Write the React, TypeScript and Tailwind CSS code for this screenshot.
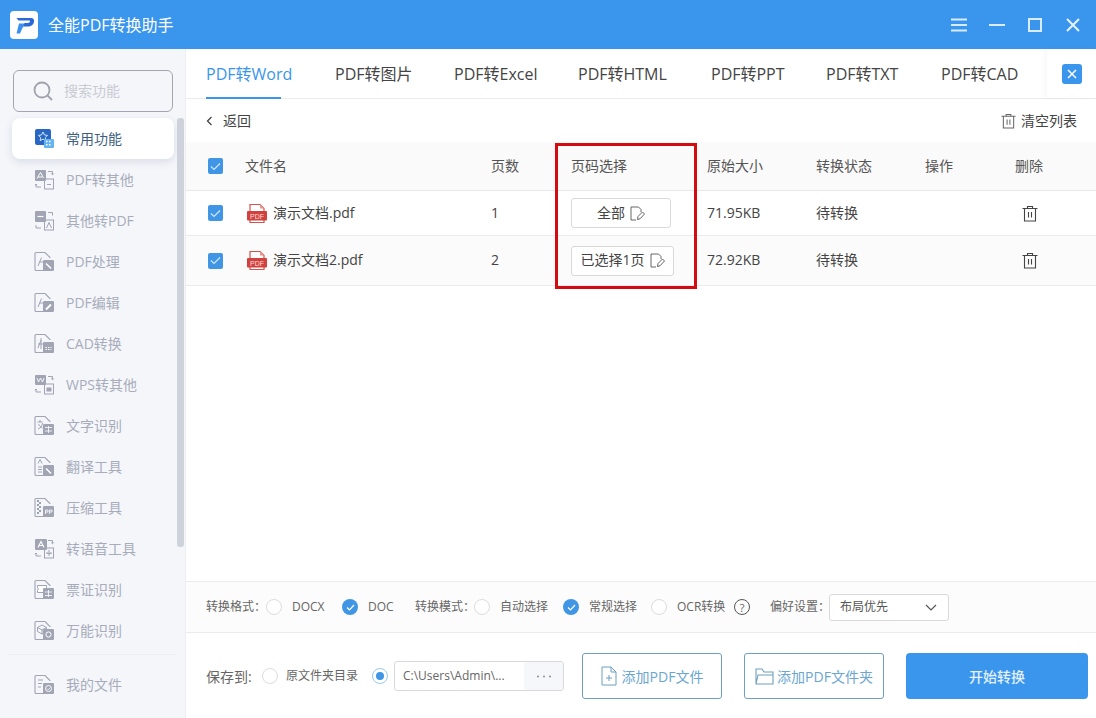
import type { ReactNode } from 'react';

const font = { fontFamily: '"Open Sans", "Noto Sans CJK SC", sans-serif' };

const GRAY = '#a0a4b3';

// outline page with a folded corner, left part of most sidebar icons
const Page = () => (
  <path d="M2 1.5h9l5 5V7M2 1.5A1 1 0 0 0 1 2.5v16a1 1 0 0 0 1 1h9" fill="none" stroke={GRAY} strokeWidth="1.1" />
);

const Badge = ({ children }: { children?: ReactNode }) => (
  <g>
    <rect x="9" y="9" width="11" height="11" rx="1.2" fill={GRAY} />
    {children}
  </g>
);

const Swap = () => (
  <g fill="none" stroke={GRAY} strokeWidth="1">
    <path d="M14 2.5h4.5v3M17.2 4.5l1.3 1.3 1.3-1.3" />
    <path d="M7 18H2v-3M.8 16.2 2 15l1.200 1.200" />
    <rect x="10.500" y="10" width="9" height="10" />
    <path d="M13 15.500h4" />
  </g>
);

const icons: Record<string, ReactNode> = {
  pdfOther: (
    <>
      <rect x="1" y="1" width="11" height="11" rx="1" fill={GRAY} />
      <path d="M3 9.500 6.500 3.500 9.500 9M4 8h4" stroke="#fff" strokeWidth="1" fill="none" />
      <Swap />
    </>
  ),
  otherPdf: (
    <>
      <rect x="1" y="1" width="11" height="11" rx="1" fill={GRAY} />
      <path d="M3.500 6.500h6" stroke="#fff" strokeWidth="1.200" />
      <g fill="none" stroke={GRAY} strokeWidth="1">
        <path d="M14 2.500h4.500v3M7 18H2v-3" />
        <rect x="10.500" y="10" width="9" height="10" />
        <path d="M12.500 18 15 12.500 17.500 18" />
      </g>
    </>
  ),
  handle: (
    <>
      <Page />
      <path d="M4 15 7.500 6.500M5 11h4" stroke={GRAY} fill="none" />
      <Badge>
        <path d="M12 12.500l5 5" stroke="#fff" strokeWidth="1.600" />
      </Badge>
    </>
  ),
  edit: (
    <>
      <Page />
      <path d="M4 15 7.500 6.500M5 11h4" stroke={GRAY} fill="none" />
      <Badge>
        <path d="M12 17.500l5-5" stroke="#fff" strokeWidth="2" />
      </Badge>
    </>
  ),
  cad: (
    <>
      <Page />
      <path d="M4 11h5M7 5v11M4 15l3-8" stroke={GRAY} fill="none" />
      <Badge>
        <path d="M11.500 14.500h6M11.500 16.500h6" stroke="#fff" strokeDasharray="1.500 1" />
      </Badge>
    </>
  ),
  wps: (
    <>
      <rect x="1" y="1" width="11" height="10" rx="1" fill={GRAY} />
      <path d="M3 4l1.500 4L6.500 4 8.500 8 10 4" stroke="#fff" strokeWidth=".9" fill="none" />
      <Swap />
      <path d="M12.500 13.500h5v4h-5z" fill={GRAY} />
    </>
  ),
  ocr: (
    <>
      <Page />
      <path d="M3.500 7h5M6 5v2M4 14c3-1 4-3 4.500-6M4.500 9c1 2 2 3 4 4" stroke={GRAY} fill="none" />
      <Badge>
        <path d="M11 12.500h7M11 16h7M14.500 11v7" stroke="#fff" strokeWidth=".8" />
      </Badge>
    </>
  ),
  translate: (
    <>
      <Page />
      <path d="M4 7.500 6 3.500l2 4M4 11h4M4 13.500h4M4 16h4" stroke={GRAY} fill="none" />
      <Badge>
        <path d="M12 12.500l5 5" stroke="#fff" strokeWidth="1.600" />
      </Badge>
    </>
  ),
  zip: (
    <>
      <Page />
      <path d="M3 4h2M5 6h2M3 8h2M5 10h2M3 12h2M5 14h2M3 16h2" stroke="#7f8494" strokeWidth="1.400" />
      <Badge>
        <path d="M11.500 13v4M11.500 13h2.500v2h-2.500M15.500 13v4M15.500 13h2.500v2h-2.500" stroke="#fff" strokeWidth=".8" fill="none" />
      </Badge>
    </>
  ),
  voice: (
    <>
      <rect x="1" y="1" width="12" height="11" rx="1" fill={GRAY} />
      <path d="M4 9.500 7 3.500l3 6M5 7.500h4" stroke="#fff" strokeWidth="1.100" fill="none" />
      <Swap />
      <path d="M15 12v6M13 14v2M17 14v2" stroke={GRAY} />
    </>
  ),
  ticket: (
    <>
      <Page />
      <path d="M3.500 6.500h9v2a2 2 0 0 0 0 3v2h-9v-2a2 2 0 0 0 0-3z" fill="#fff" stroke={GRAY} />
      <Badge>
        <path d="M11 13h7M11 16.500h7M14.500 11v7" stroke="#fff" strokeWidth=".8" />
      </Badge>
    </>
  ),
  universal: (
    <>
      <Page />
      <path d="M3.500 7.500 8 5l4.500 2.500v4L8 14l-4.500-2.500zM3.500 7.500 8 10l4.500-2.500M8 10v4" fill="none" stroke={GRAY} />
      <Badge>
        <circle cx="14.500" cy="14.500" r="2.600" fill="none" stroke="#fff" />
      </Badge>
    </>
  ),
  files: (
    <>
      <Page />
      <path d="M4 6h5M4 9.500h4M4 13h3" stroke={GRAY} fill="none" />
      <Badge>
        <circle cx="14.500" cy="14.500" r="3" fill="none" stroke="#fff" />
        <path d="M13 14.500l1.200 1.200 2-2" fill="none" stroke="#fff" strokeWidth=".8" />
      </Badge>
    </>
  ),
};

const SideIcon = ({ name }: { name: string }) => (
  <svg width="21" height="21" viewBox="0 0 21 21" className="shrink-0">
    {icons[name]}
  </svg>
);

const menu = [
  ['pdfOther', 'PDF转其他'],
  ['otherPdf', '其他转PDF'],
  ['handle', 'PDF处理'],
  ['edit', 'PDF编辑'],
  ['cad', 'CAD转换'],
  ['wps', 'WPS转其他'],
  ['ocr', '文字识别'],
  ['translate', '翻译工具'],
  ['zip', '压缩工具'],
  ['voice', '转语音工具'],
  ['ticket', '票证识别'],
  ['universal', '万能识别'],
];

const MenuItem = ({ icon, label }: { icon: string; label: string }) => (
  <div className="flex h-[41px] items-center gap-[11px] pl-[34px] text-[14px] text-[#a8acba]">
    <SideIcon name={icon} />
    <span className="whitespace-nowrap">{label}</span>
  </div>
);

const Sidebar = () => (
  <aside className="relative flex w-[186px] shrink-0 flex-col border-r border-[#eceef2] bg-[#f4f6fa] pt-[21px]">
    <div className="mx-[13px] flex h-[42px] w-[160px] items-center gap-[11px] rounded-[6px] border border-[#a3a6b0] pb-[2px] pl-[19px] text-[14px] text-[#c9cbd2]">
      <svg width="20" height="20" viewBox="0 0 20 20" fill="none" stroke="#a0a3ad" strokeWidth="1.800" className="mt-[2px]">
        <circle cx="9" cy="9" r="7.500" />
        <path d="M14.500 14.500 19 19" />
      </svg>
      <span>搜索功能</span>
    </div>
    <div className="mx-[12px] mt-[6px] flex h-[41px] w-[162px] shrink-0 items-center gap-[11px] rounded-[8px] bg-white pl-[22px] text-[14px] text-[#3f5f80] shadow-[0_3px_8px_rgba(60,70,100,0.14)]">
      <svg width="21" height="21" viewBox="0 0 21 21" className="shrink-0">
        <rect x="1" y="1" width="16" height="16" rx="2" fill="#2a66c4" />
        <path d="M9 4l1.500 3 3 .4-2.200 2.200.5 3L9 11.200l-2.800 1.400.5-3L4.500 7.400l3-.4z" fill="none" stroke="#cfe6ff" />
        <rect x="10" y="11" width="10" height="9" rx="1" fill="#65b4f2" />
        <path d="M12 13.500h1.500M15 13.500h1.500M12 16.800h1.500M15 16.800h1.500" stroke="#fff" strokeWidth="1.400" />
      </svg>
      <span>常用功能</span>
    </div>
    <div>
      {menu.map(([icon, label]) => (
        <MenuItem key={label} icon={icon} label={label} />
      ))}
    </div>
    <div className="mx-[8px] mt-[3px] border-t border-[#eceef3]" />
    <div className="mt-[9px]">
      <MenuItem icon="files" label="我的文件" />
    </div>
    {/* scrollbar thumb */}
    <div className="absolute left-[177px] top-[69px] h-[429px] w-[7px] rounded-[3px] bg-[#cdd2db]" />
  </aside>
);

const Check = () => (
  <span className="flex h-4 w-[15px] items-center justify-center rounded-[2px] bg-[#4096e4]">
    <svg width="11" height="9" viewBox="0 0 11 9" fill="none" stroke="#cfe6fb" strokeWidth="1.200">
      <path d="M1 4.500 4 7.500 10 1.500" />
    </svg>
  </span>
);

const PdfIcon = () => (
  <svg width="20" height="21" viewBox="0 0 20 21" className="shrink-0">
    <path d="M3 8V1.500h10l4 4V8M3 17v2.500h14V17" fill="none" stroke="#d5534f" strokeWidth="1.200" />
    <path d="M13 1.500V5.500h4z" fill="#e79a96" />
    <rect x="0" y="8" width="20" height="9.500" rx="1" fill="#d1423e" />
    <text x="10" y="15.500" textAnchor="middle" fontSize="7" fill="#fbdcdb" fontFamily="Liberation Sans, sans-serif">
      PDF
    </text>
  </svg>
);

const EditIcon = () => (
  <svg width="15" height="15" viewBox="0 0 15 15" fill="none" stroke="#555" strokeWidth=".9" className="shrink-0">
    <path d="M6 14H1V1h7.500L11 3.500V6" />
    <path d="M7.500 13.500 8 10.500l4.500-4.500 2 2L10 12.800z" />
  </svg>
);

const Trash = ({ size = 16, color = '#444' }: { size?: number; color?: string }) => (
  <svg width={size} height={size + 1} viewBox="0 0 16 17" fill="none" stroke={color} strokeWidth="1.100">
    <path d="M.5 3.500h15M5.500 3.500v-2h5v2M2.500 3.500v12.500h11V3.500M6.500 7v5.500M9.500 7v5.500" />
  </svg>
);

const tableCols = 'grid grid-cols-[59px_246px_80px_136px_109px_109px_90px_81px] items-center text-[14px]';

const FileRow = ({ name, pages, pick, pickWidth, size, shade, height }: {
  name: string;
  pages: string;
  pick: string;
  pickWidth: string;
  size: string;
  shade: string;
  height: string;
}) => (
  <div className={`${tableCols} ${shade} ${height} shrink-0 border-b border-[#ebebeb] text-[#444]`}>
    <div className="pl-[22px]">
      <Check />
    </div>
    <div className="flex items-center gap-[6px] pl-[2px]">
      <PdfIcon />
      <span className="pb-[2px]">{name}</span>
    </div>
    <div className="pb-[2px]">{pages}</div>
    <div>
      <div className={`flex h-[30px] ${pickWidth} items-center justify-center gap-[5px] rounded-[3px] border border-[#d9d9d9] bg-white`}>
        <span className="whitespace-nowrap pb-[2px]">{pick}</span>
        <EditIcon />
      </div>
    </div>
    <div className="pb-[2px]">{size}</div>
    <div className="pb-[2px]">待转换</div>
    <div />
    <div className="pl-[7px]">
      <Trash />
    </div>
  </div>
);

const Radio = ({ checked = false }: { checked?: boolean }) =>
  checked ? (
    <span className="flex h-4 w-4 shrink-0 items-center justify-center rounded-full bg-[#4096e4]">
      <svg width="9" height="7" viewBox="0 0 9 7" fill="none" stroke="#fff" strokeWidth="1.200">
        <path d="M1 3.500 3.500 6 8 1" />
      </svg>
    </span>
  ) : (
    <span className="h-4 w-4 shrink-0 rounded-full border border-[#dcdcdc] bg-white" />
  );

const tabs = [
  ['PDF转Word', 'w-[129px]'],
  ['PDF转图片', 'w-[119px]'],
  ['PDF转Excel', 'w-[124px]'],
  ['PDF转HTML', 'w-[133px]'],
  ['PDF转PPT', 'w-[115px]'],
  ['PDF转TXT', 'w-[115px]'],
  ['PDF转CAD', 'w-[85px]'],
];

const heads = ['文件名', '页数', '页码选择', '原始大小', '转换状态', '操作', '删除'];

const App = () => {
  return (
    <div className="flex h-[718px] w-[1096px] flex-col overflow-hidden bg-white" style={font}>
      <header className="flex h-[49px] shrink-0 items-center bg-[#3a96ec] pl-[10px] text-white">
        <svg width="28" height="28" viewBox="0 0 28 28">
          <rect width="28" height="28" rx="4" fill="#fff" />
          <path d="M6.500 7H21c2.500 0 3.500 1.800 3 4s-2.500 4.500-5 4.500h-6.500l2-3.500h3.500c1 0 1.800-.6 2-1.400s-.3-1.100-1-1.100H8.500z" fill="#2a69d8" />
          <path d="M9 12.500h5.500L10 22.500H6.500z" fill="#3b8ff0" />
        </svg>
        <span className="ml-[10px] text-[16px]">全能PDF转换助手</span>
        <div className="ml-auto mr-[16px] flex items-center">
          <svg width="16" height="14" viewBox="0 0 16 14" stroke="#d8ecfd" strokeWidth="2">
            <path d="M0 1.500h16M0 7h16M0 12.500h16" />
          </svg>
          <svg width="16" height="14" viewBox="0 0 16 14" stroke="#d8ecfd" strokeWidth="2" className="ml-[22px]">
            <path d="M0 7h16" />
          </svg>
          <svg width="14" height="14" viewBox="0 0 14 14" fill="none" stroke="#d8ecfd" strokeWidth="2" className="ml-[23px]">
            <rect x="1" y="1" width="12" height="12" />
          </svg>
          <svg width="14" height="14" viewBox="0 0 14 14" stroke="#e6f3fe" strokeWidth="2" className="ml-[24px]">
            <path d="M1 1l12 12M13 1 1 13" />
          </svg>
        </div>
      </header>

      <div className="flex min-h-0 flex-1">
        <Sidebar />

        <main className="relative flex min-w-0 flex-1 flex-col">
          <nav className="flex h-[50px] shrink-0 border-b border-[#ebebeb] pl-5 text-[16px] text-[#444]">
            {tabs.map(([label, width], i) => (
              <div key={label} className={`${width} relative -mb-px flex h-[50px] items-center whitespace-nowrap ${i === 0 ? 'text-[#3a96ec]' : ''}`}>
                {label}
                {i === 0 && <span className="absolute bottom-0 left-0 h-[2px] w-[75px] bg-[#3a96ec]" />}
              </div>
            ))}
            <div className="ml-auto flex w-[49px] items-center justify-center bg-white shadow-[-3px_0_5px_rgba(0,0,0,0.03)]">
              <span className="flex h-5 w-5 items-center justify-center rounded-[3px] bg-[#3a96ec]">
                <svg width="10" height="10" viewBox="0 0 10 10" stroke="#fff" strokeWidth="1.500">
                  <path d="M1 1l8 8M9 1 1 9" />
                </svg>
              </span>
            </div>
          </nav>

          <div className="flex h-[43px] shrink-0 items-center justify-between pl-5 pr-[19px] text-[14px] text-[#444]">
            <div className="flex items-center gap-[10px]">
              <svg width="7" height="10" viewBox="0 0 7 10" fill="none" stroke="#444" strokeWidth="1.300">
                <path d="M5.500 1 1.500 5l4 4" />
              </svg>
              <span>返回</span>
            </div>
            <div className="flex items-center gap-[5px]">
              <Trash size={15} color="#666" />
              <span>清空列表</span>
            </div>
          </div>

          <div className={`${tableCols} h-[49px] shrink-0 border-b border-[#e8e8e8] bg-[#fafafa] text-[#555]`}>
            <div className="pl-[22px]">
              <Check />
            </div>
            {heads.map((head) => (
              <div key={head} className="pb-[2px]">
                {head}
              </div>
            ))}
          </div>
          <FileRow name="演示文档.pdf" pages="1" pick="全部" pickWidth="w-[100px]" size="71.95KB" shade="bg-white" height="h-[45px]" />
          <FileRow name="演示文档2.pdf" pages="2" pick="已选择1页" pickWidth="w-[103px]" size="72.92KB" shade="bg-[#fbfbfb]" height="h-[50px]" />

          <div className="flex-1" />

          <div className="flex h-[52px] shrink-0 items-center whitespace-nowrap border-y border-[#ebebeb] bg-[#fcfcfc] pl-5 text-[12px] text-[#666]">
            <span className="w-[60px]">转换格式：</span>
            <Radio />
            <span className="ml-[10px] w-[50px]">DOCX</span>
            <Radio checked />
            <span className="ml-[10px] w-[47px]">DOC</span>
            <span className="w-[59px]">转换模式：</span>
            <Radio />
            <span className="ml-[10px] w-[63px]">自动选择</span>
            <Radio checked />
            <span className="ml-[10px] w-[62px]">常规选择</span>
            <Radio />
            <span className="ml-[10px] w-[57px]">OCR转换</span>
            <span className="flex h-4 w-4 items-center justify-center rounded-full border border-[#555] text-[11px] leading-none">?</span>
            <span className="ml-[20px] w-[59px]">偏好设置：</span>
            <div className="flex h-[27px] w-[120px] items-center justify-between rounded-[3px] border border-[#d9d9d9] bg-white pl-[10px] pr-[11px] text-[#555]">
              <span>布局优先</span>
              <svg width="12" height="7" viewBox="0 0 12 7" fill="none" stroke="#555" strokeWidth="1.200">
                <path d="M1 1l5 5 5-5" />
              </svg>
            </div>
          </div>

          <div className="flex h-[85px] shrink-0 items-start whitespace-nowrap pl-5 pt-[20px]">
            <div className="flex h-[46px] items-center text-[#666]">
              <span className="w-[56px] text-[14px]">保存到:</span>
              <Radio />
              <span className="ml-[8px] w-[86px] text-[12px]">原文件夹目录</span>
              <span className="flex h-4 w-4 items-center justify-center rounded-full border border-[#9cc8ee] bg-white">
                <span className="h-2 w-2 rounded-full bg-[#4096e4]" />
              </span>
              <div className="ml-[6px] flex h-[30px] w-[170px] items-center overflow-hidden rounded-[3px] border border-[#d9d9d9] bg-white text-[12px]">
                <span className="w-[129px] pl-[8px]">C:\Users\Admin\...</span>
                <span className="flex h-full flex-1 items-center justify-center bg-[#f5f7fa]">
                  <svg width="16" height="3" viewBox="0 0 16 3" fill="#8a8f99">
                    <circle cx="2" cy="1.500" r="1" />
                    <circle cx="8" cy="1.500" r="1" />
                    <circle cx="14" cy="1.500" r="1" />
                  </svg>
                </span>
              </div>
            </div>
            <div className="ml-[18px] flex h-[46px] w-[140px] items-center justify-center gap-[5px] rounded-[3px] border border-[#6f9fbe] text-[14px] text-[#6aa6d0]">
              <svg width="16" height="20" viewBox="0 0 16 20" fill="none" stroke="#6f9fbe" strokeWidth="1">
                <path d="M1 1h9l5 5v13H1zM10 1v5h5M5 12h6M8 9v6" />
              </svg>
              <span>添加PDF文件</span>
            </div>
            <div className="ml-[22px] flex h-[46px] w-[140px] items-center justify-center gap-[3px] rounded-[3px] border border-[#6f9fbe] text-[14px] text-[#6aa6d0]">
              <svg width="19" height="17" viewBox="0 0 19 17" fill="none" stroke="#6f9fbe" strokeWidth="1.100">
                <path d="M1 16V1h6l2 3h9v3M1 16 3 7h15v9z" />
              </svg>
              <span>添加PDF文件夹</span>
            </div>
            <div className="ml-[22px] flex h-[46px] w-[182px] items-center justify-center rounded-[4px] bg-[#3a96ec] text-[14px] font-medium text-[#e4f1fd]">
              开始转换
            </div>
          </div>

          {/* red annotation drawn over the table */}
          <div className="pointer-events-none absolute left-[369px] top-[94px] h-[146px] w-[142px] border-[3px] border-[#d40c12]" />
        </main>
      </div>
    </div>
  );
};

export default App;
